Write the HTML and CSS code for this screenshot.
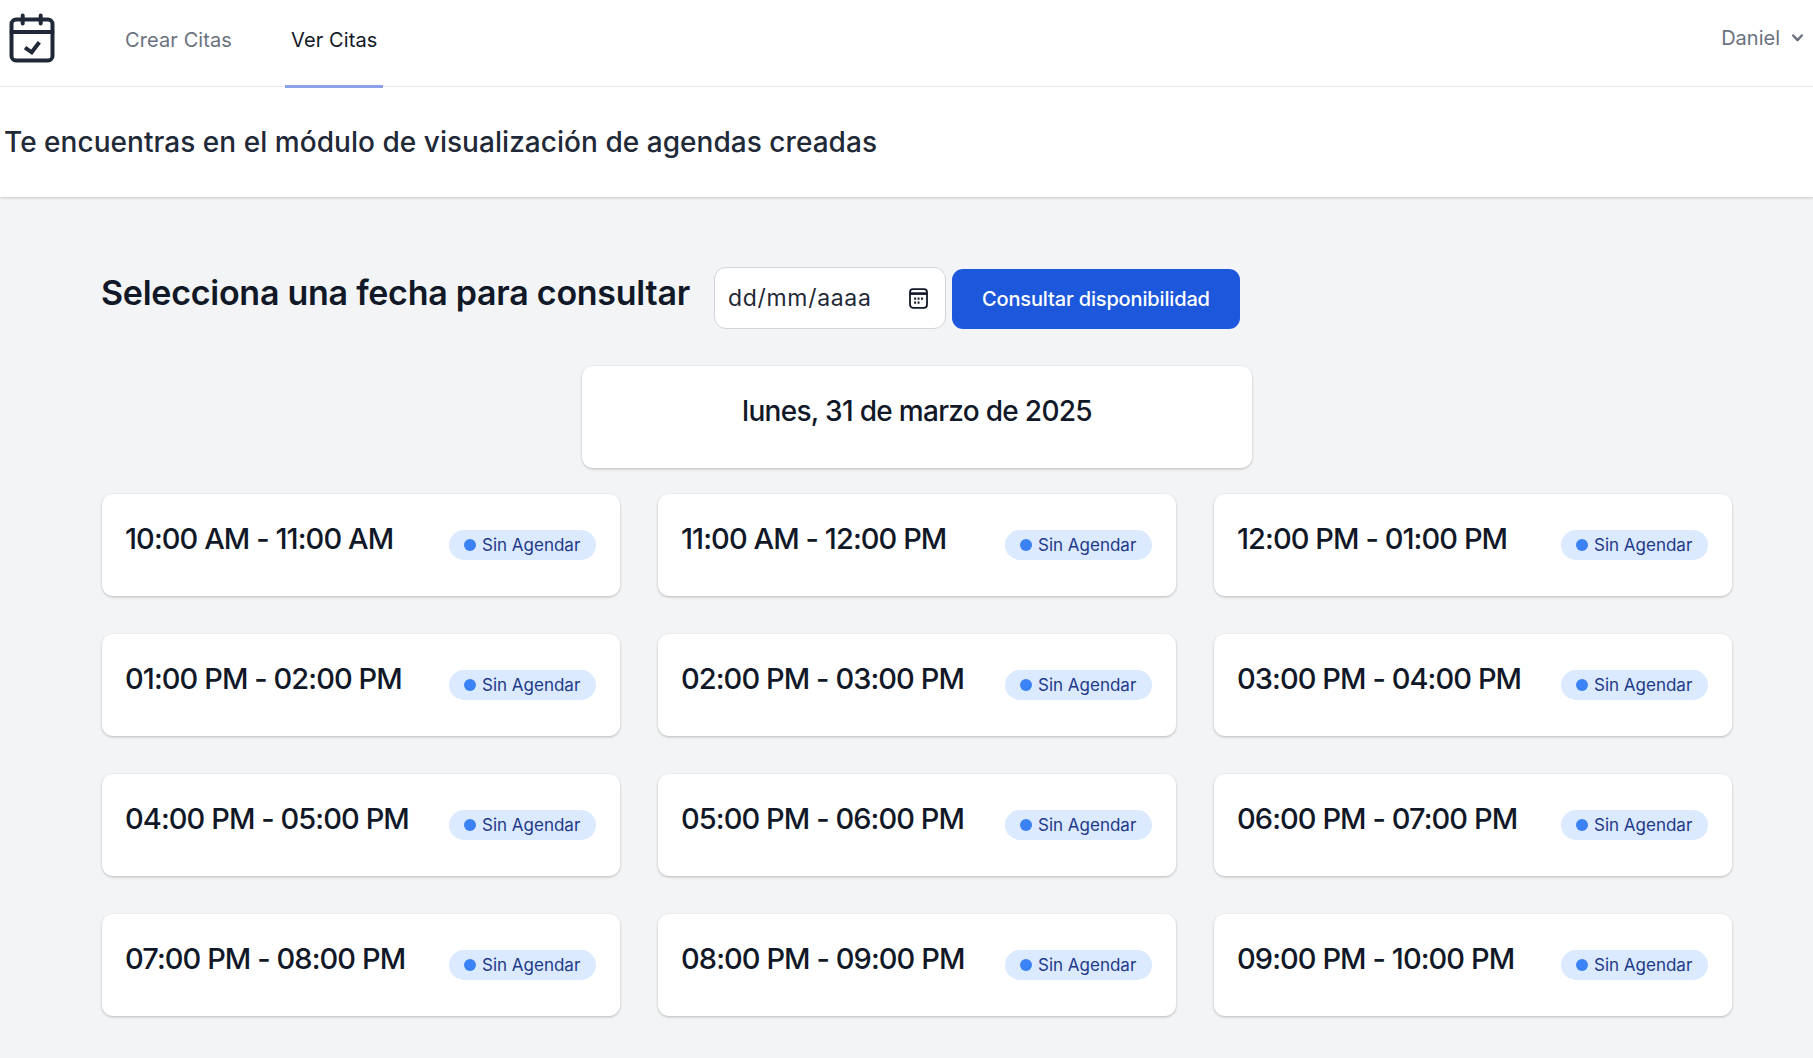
FILE: index.html
```html
<!DOCTYPE html>
<html lang="es">
<head>
<meta charset="utf-8">
<title>Ver Citas</title>
<link rel="stylesheet" href="styles.css">
</head>
<body>
<nav class="nav">
  <svg class="logo" viewBox="0 0 46 50" fill="none" stroke="#1f2937" stroke-width="4" stroke-linecap="round" stroke-linejoin="round">
    <rect x="2.5" y="6.5" width="41" height="41" rx="4.5"/>
    <path d="M13.7 2.5v8M31.7 2.5v8M2.5 19h41"/>
    <path d="M16 34.7l6.7 4.6 7.6-10" stroke-linecap="butt" stroke-linejoin="miter"/>
  </svg>
  <div class="tabs">
    <a class="tab">Crear Citas</a>
    <a class="tab tab-active">Ver Citas</a>
  </div>
  <div class="user">
    <span>Daniel</span>
    <svg class="chev" viewBox="0 0 11 8" fill="none" stroke="#6b7280" stroke-width="2.4" stroke-linecap="round" stroke-linejoin="round"><path d="M1.2 1.5l4.3 4.6 4.3-4.6"/></svg>
  </div>
</nav>
<header class="banner">
  <h1>Te encuentras en el módulo de visualización de agendas creadas</h1>
</header>
<main class="main">
  <div class="query">
    <h2>Selecciona una fecha para consultar</h2>
    <div class="date-input">
      <span>dd/mm/aaaa</span>
      <svg class="cal" viewBox="0 0 19 21" fill="none" stroke="#111827" stroke-width="1.8"><rect x="1" y="1.2" width="17" height="18.6" rx="3"/><path d="M1 5.6h17" stroke-width="2.6"/><path d="M5.2 10.6h1.9M8.6 10.6h1.9M12 10.6h1.9M5.2 14.6h1.9M8.6 14.6h1.9" stroke-width="2.2"/></svg>
    </div>
    <button class="btn">Consultar disponibilidad</button>
  </div>
  <div class="date-row"><div class="date-card">lunes, 31 de marzo de 2025</div></div>
  <div class="grid">
    <div class="card"><span class="time">10:00 AM - 11:00 AM</span><span class="badge"><i class="dot"></i>Sin Agendar</span></div>
    <div class="card"><span class="time">11:00 AM - 12:00 PM</span><span class="badge"><i class="dot"></i>Sin Agendar</span></div>
    <div class="card"><span class="time">12:00 PM - 01:00 PM</span><span class="badge"><i class="dot"></i>Sin Agendar</span></div>
    <div class="card"><span class="time">01:00 PM - 02:00 PM</span><span class="badge"><i class="dot"></i>Sin Agendar</span></div>
    <div class="card"><span class="time">02:00 PM - 03:00 PM</span><span class="badge"><i class="dot"></i>Sin Agendar</span></div>
    <div class="card"><span class="time">03:00 PM - 04:00 PM</span><span class="badge"><i class="dot"></i>Sin Agendar</span></div>
    <div class="card"><span class="time">04:00 PM - 05:00 PM</span><span class="badge"><i class="dot"></i>Sin Agendar</span></div>
    <div class="card"><span class="time">05:00 PM - 06:00 PM</span><span class="badge"><i class="dot"></i>Sin Agendar</span></div>
    <div class="card"><span class="time">06:00 PM - 07:00 PM</span><span class="badge"><i class="dot"></i>Sin Agendar</span></div>
    <div class="card"><span class="time">07:00 PM - 08:00 PM</span><span class="badge"><i class="dot"></i>Sin Agendar</span></div>
    <div class="card"><span class="time">08:00 PM - 09:00 PM</span><span class="badge"><i class="dot"></i>Sin Agendar</span></div>
    <div class="card"><span class="time">09:00 PM - 10:00 PM</span><span class="badge"><i class="dot"></i>Sin Agendar</span></div>
  </div>
</main>
</body>
</html>
```
FILE: styles.css
```css
* { box-sizing: border-box; }
html, body { height: 100%; }
body {
  margin: 0;
  background: #f3f4f6;
  font-family: Inter, "Noto Sans", sans-serif;
  color: #111827;
  overflow: hidden;
}
.nav {
  height: 87px;
  background: #fff;
  border-bottom: 1px solid #e5e7eb;
  display: flex;
  align-items: stretch;
  padding: 0 0 0 9px;
  position: relative;
  z-index: 1;
}
.logo { width: 46px; height: 50px; margin-top: 13px; flex: none; }
.tabs { display: flex; margin-left: 64px; }
.tab {
  font-size: 20px;
  line-height: 24px;
  color: #6b7280;
  padding: 28px 6px 0;
  margin-right: 47px;
  height: 88px;
  border-bottom: 3px solid transparent;
  letter-spacing: 0.1px;
}
.tab-active { color: #111827; border-bottom-color: #8da2ea; margin-right: 0; }
.user {
  margin-left: auto;
  display: flex;
  align-items: center;
  gap: 12px;
  height: 76px;
  padding-right: 10px;
  color: #6b7280;
  font-size: 20px;
}
.chev { width: 11px; height: 8px; }
.banner {
  height: 110px;
  background: #fff;
  box-shadow: 0 1px 3px rgba(0,0,0,.18);
  padding: 38px 0 0 4px;
  position: relative;
}
.banner h1 {
  margin: 0;
  font-size: 28px;
  line-height: 34px;
  font-weight: 500;
  letter-spacing: 0.04px;
  color: #1f2937;
}
.main { padding: 70px 80px 0 101px; }
.query { display: flex; align-items: center; height: 62px; }
.query h2 {
  margin: 0 24px 0 0;
  font-size: 34px;
  line-height: 44px;
  font-weight: 600;
  letter-spacing: -0.26px;
  color: #111827;
  position: relative;
  top: -5px;
}
.date-input {
  width: 232px;
  height: 62px;
  background: #fff;
  border: 1px solid #d1d5db;
  border-radius: 12px;
  display: flex;
  align-items: center;
  justify-content: space-between;
  padding: 0 17px 0 13px;
  font-size: 23px;
  letter-spacing: 0.7px;
  color: #1f2937;
}
.cal { width: 19px; height: 21px; }
.btn {
  margin-left: 6px;
  width: 288px;
  height: 60px;
  margin-top: 2px;
  border: 0;
  border-radius: 11px;
  background: #1d57db;
  color: #fff;
  font: 500 20px Inter, sans-serif;
  letter-spacing: -0.15px;
}
.date-row { display: flex; justify-content: center; margin-top: 37px; width: 1632px; }
.date-card {
  width: 670px;
  height: 102px;
  background: #fff;
  border-radius: 11px;
  box-shadow: 0 1px 3px rgba(0,0,0,.18), 0 1px 2px rgba(0,0,0,.08);
  text-align: center;
  padding-top: 27px;
  font-size: 28px;
  line-height: 36px;
  font-weight: 500;
  letter-spacing: -0.7px;
  color: #111827;
}
.grid {
  display: grid;
  grid-template-columns: repeat(3, 518px);
  grid-auto-rows: 102px;
  column-gap: 38px;
  row-gap: 38px;
  margin: 26px 0 0 1px;
}
.card {
  background: #fff;
  border-radius: 11px;
  box-shadow: 0 1px 3px rgba(0,0,0,.18), 0 1px 2px rgba(0,0,0,.08);
  padding: 0 24px;
  display: flex;
  justify-content: space-between;
  align-items: flex-start;
}
.time {
  font-size: 29px;
  line-height: 36px;
  font-weight: 500;
  letter-spacing: -0.92px;
  margin: 27px 0 0 -1px;
  color: #111827;
}
.badge {
  margin-top: 36px;
  height: 30px;
  width: 147px;
  flex: none;
  border-radius: 15px;
  background: #dbeafe;
  color: #1e3a8a;
  font-size: 17px;
  display: flex;
  align-items: center;
  padding-left: 15px;
  gap: 6px;
}
.dot { width: 12px; height: 12px; border-radius: 50%; background: #3b82f6; flex: none; }
```
